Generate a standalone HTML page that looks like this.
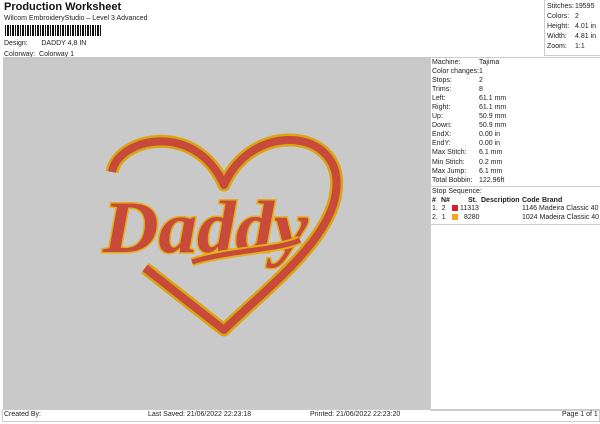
<!DOCTYPE html><html><head><style>
body{margin:0;width:600px;height:424px;background:#fff;font-family:"Liberation Sans",sans-serif;font-size:7px;color:#222;position:relative;overflow:hidden}
.a{position:absolute;white-space:nowrap}
.box{position:absolute;border:1px solid #ccc}
</style></head><body>
<div class="a" style="left:4px;top:1px;font-size:11px;font-weight:bold;color:#111">Production Worksheet</div>
<div class="a" style="left:4px;top:15px">Wilcom EmbroideryStudio – Level 3 Advanced</div>
<div class="a" style="left:5px;top:25px;width:96px;height:11px;background:repeating-linear-gradient(90deg,#111 0 1px,#fff 1px 2px,#111 2px 4px,#fff 4px 5px)"></div>
<div class="a" style="left:4px;top:40px">Design:&nbsp;&nbsp;&nbsp;&nbsp;&nbsp;&nbsp;&nbsp;DADDY 4,8 IN</div>
<div class="a" style="left:4px;top:51px">Colorway:&nbsp;&nbsp;Colorway 1</div>
<div class="box" style="left:544px;top:0;width:55px;height:55px;border-top:none"></div>
<div class="a" style="left:547px;top:2px;line-height:10px">Stitches:<br>Colors:<br>Height:<br>Width:<br>Zoom:</div>
<div class="a" style="left:575px;top:2px;line-height:10px">19595<br>2<br>4.01 in<br>4.81 in<br>1:1</div>
<div class="a" style="left:3px;top:57px;width:427px;height:352px;background:#c9c9c9"></div>
<div class="box" style="left:430px;top:57px;width:169px;height:352px"></div>
<div class="a" style="left:432px;top:58px;line-height:9.05px">Machine:<br>Color changes:<br>Stops:<br>Trims:<br>Left:<br>Right:<br>Up:<br>Down:<br>EndX:<br>EndY:<br>Max Stitch:<br>Min Stitch:<br>Max Jump:<br>Total Bobbin:</div>
<div class="a" style="left:479px;top:58px;line-height:9.05px">Tajima<br>1<br>2<br>8<br>61.1 mm<br>61.1 mm<br>50.9 mm<br>50.9 mm<br>0.00 in<br>0.00 in<br>6.1 mm<br>0.2 mm<br>6.1 mm<br>122.96ft</div>
<div class="a" style="left:430px;top:186px;width:170px;border-top:1px solid #ccc"></div>
<div class="a" style="left:432px;top:187px;line-height:9px">Stop Sequence:</div>
<div class="a" style="left:432px;top:196px;line-height:9px;font-weight:bold;text-decoration:underline">
<span style="position:absolute;left:0">#</span><span style="position:absolute;left:9px">N#</span><span style="position:absolute;left:36px">St.</span><span style="position:absolute;left:49px">Description</span><span style="position:absolute;left:90px">Code</span><span style="position:absolute;left:110px">Brand</span></div>
<div class="a" style="left:432px;top:204px;line-height:9px">1.&nbsp;&nbsp;2</div>
<div class="a" style="left:452px;top:205px;width:6px;height:6px;background:#d6202a"></div>
<div class="a" style="left:460px;top:204px;line-height:9px">11313</div>
<div class="a" style="left:522px;top:204px;line-height:9px">1146 Madeira Classic 40</div>
<div class="a" style="left:432px;top:213px;line-height:9px">2.&nbsp;&nbsp;1</div>
<div class="a" style="left:452px;top:214px;width:6px;height:6px;background:#f5a623"></div>
<div class="a" style="left:464px;top:213px;line-height:9px">8280</div>
<div class="a" style="left:522px;top:213px;line-height:9px">1024 Madeira Classic 40</div>
<div class="a" style="left:430px;top:224px;width:170px;border-top:1px solid #ccc"></div>
<div class="box" style="left:2px;top:409px;width:596px;height:11px"></div>
<div class="a" style="left:4px;top:411px">Created By:</div>
<div class="a" style="left:148px;top:411px">Last Saved: 21/06/2022 22:23:18</div>
<div class="a" style="left:310px;top:411px">Printed: 21/06/2022 22:23:20</div>
<div class="a" style="left:562px;top:411px">Page 1 of 1</div>
<svg class="a" style="left:0;top:0" width="600" height="424">
<g fill="none" stroke-linejoin="round">
<path d="M112,172 C118,138 195,120 224,185 C252,120 345,128 336,192 C330,242 262,292 224,330 L145,268" stroke="#d9a514" stroke-width="13"/>
<path d="M112,172 C118,138 195,120 224,185 C252,120 345,128 336,192 C330,242 262,292 224,330 L145,268" stroke="#c84a3a" stroke-width="8"/>
</g>
<text x="103" y="252" font-family="Liberation Serif,serif" font-style="italic" font-weight="bold" font-size="74" fill="#c84a3a" stroke="#e3ae1a" stroke-width="3" paint-order="stroke" textLength="205" lengthAdjust="spacingAndGlyphs">Daddy</text>
<path d="M192,262 C230,250 280,250 300,240" fill="none" stroke="#e3ae1a" stroke-width="9"/>
<path d="M192,262 C230,250 280,250 300,240" fill="none" stroke="#c84a3a" stroke-width="5"/>
</svg>
</body></html>
